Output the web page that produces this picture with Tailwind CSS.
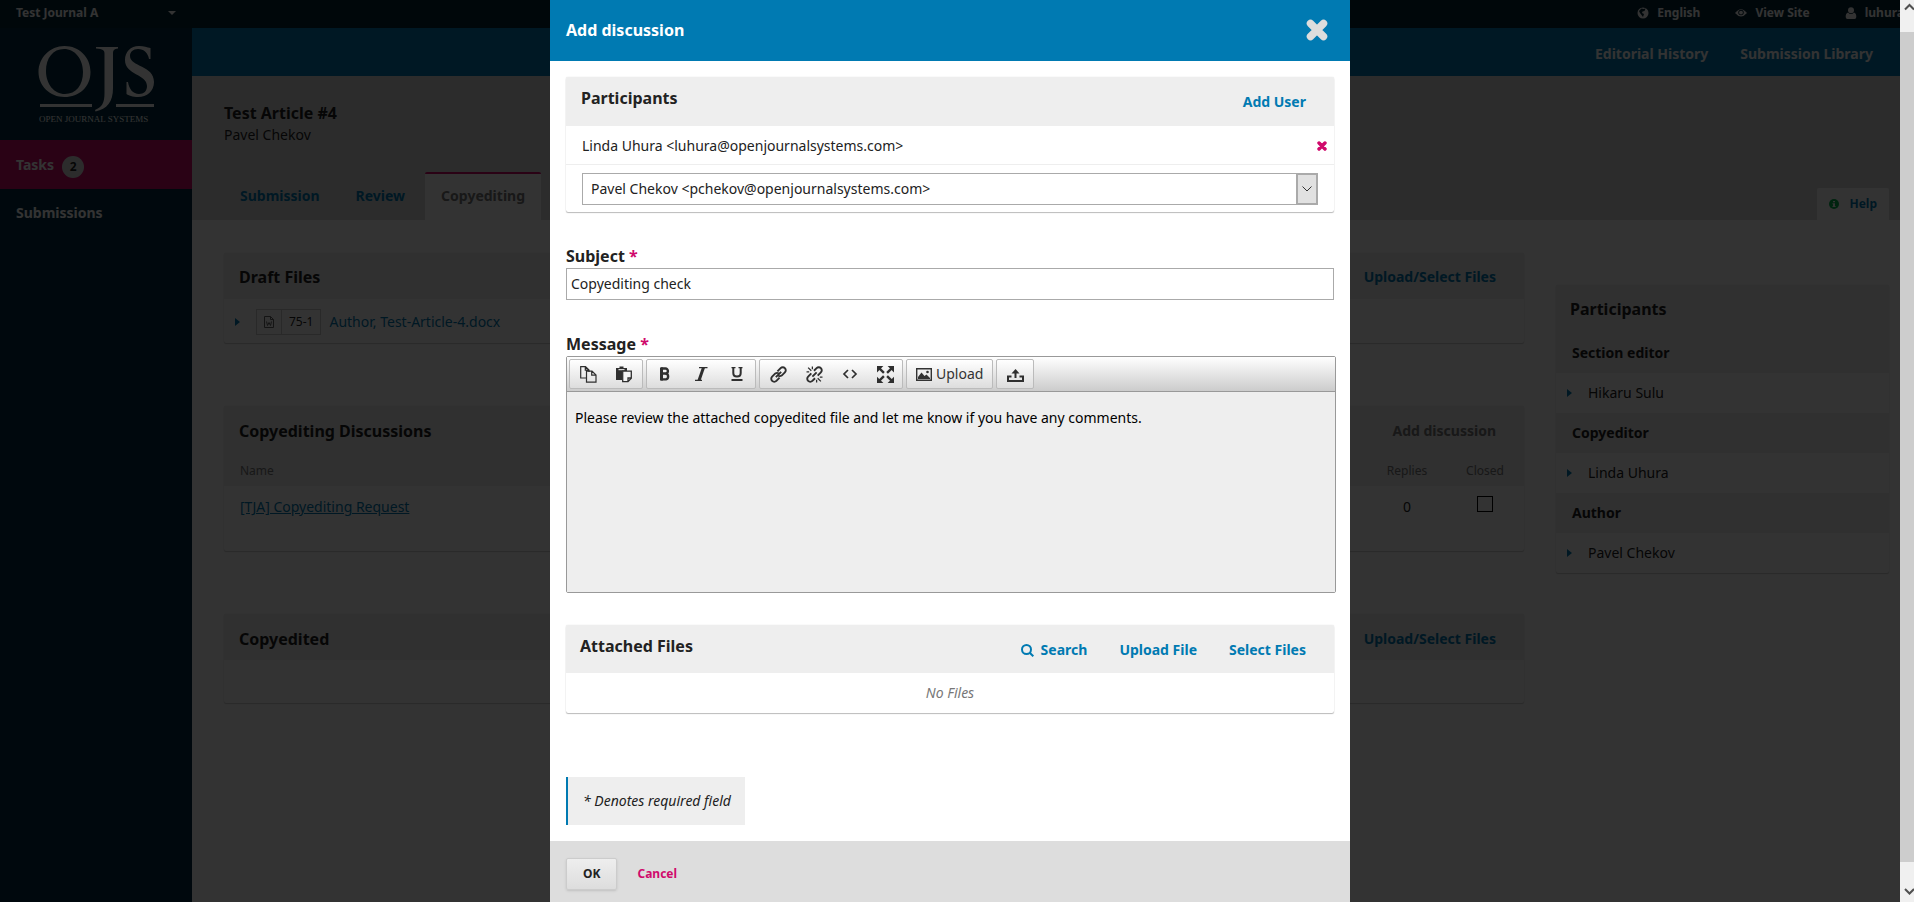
<!DOCTYPE html>
<html lang="en">
<head>
<meta charset="utf-8">
<title>Add discussion</title>
<script src="https://cdn.jsdelivr.net/npm/@tailwindcss/browser@4"></script>
</head>
<body class="font-['Noto_Sans',sans-serif] text-sm leading-5 text-[#222]">
<svg class="hidden">
  <symbol id="times" viewBox="0 0 22 22"><path d="M4.500 4.500L17.500 17.500M17.500 4.500L4.500 17.500" stroke="currentColor" stroke-width="5" fill="none" stroke-linecap="square"/><path d="M4.500 4.500L17.500 17.500M17.500 4.500L4.500 17.500" stroke="currentColor" stroke-width="7.500" fill="none" stroke-linecap="round"/></symbol>
  <symbol id="tri" viewBox="0 0 5 8"><path d="M0 0L5 4L0 8z" fill="currentColor"/></symbol>
</svg>
<div class="flex h-screen overflow-hidden">
  <div class="relative flex min-w-0 flex-1 flex-col overflow-hidden">
    <!-- Top bar -->
    <header class="flex h-7 shrink-0 items-center justify-between overflow-hidden bg-[#002434] pb-0.5 text-xs font-bold text-white">
      <button class="flex w-44 items-center justify-between pl-4 font-bold">Test Journal A
        <svg class="h-1 w-2" viewBox="0 0 8 4"><path d="M0 0h8L4 4z" fill="currentColor"/></svg>
      </button>
      <nav class="-mr-1 flex items-center gap-[35px]">
        <a href="#" class="flex items-center gap-2"><svg class="size-3" viewBox="0 0 12 12"><circle cx="6" cy="6" r="5.500" fill="currentColor"/><path d="M4.500 1.500L6.500 2L8.500 1.500L7.500 4L5.500 4.500L5 6L7 7L6 10L4.500 8L3 6L2 4z" fill="#002434"/></svg>English</a>
        <a href="#" class="flex items-center gap-2"><svg class="h-3 w-3" viewBox="0 0 14 12"><path d="M0 6Q7-3 14 6Q7 14 0 6z" fill="currentColor"/><circle cx="7" cy="5.500" r="3.200" fill="#002434"/><circle cx="7" cy="5.500" r="2.200" fill="currentColor"/></svg>View Site</a>
        <a href="#" class="flex items-center gap-2"><svg class="size-3" viewBox="0 0 12 12"><circle cx="6" cy="3.200" r="3" fill="currentColor"/><path d="M3 5.500C1 6 .7 8 .7 10Q.7 12 2.500 12h7Q11.300 12 11.300 10C11.300 8 11 6 9 5.500Q6 8.500 3 5.500z" fill="currentColor"/></svg>luhura</a>
      </nav>
    </header>
    <div class="flex min-h-0 flex-1">
      <!-- Sidebar -->
      <aside class="w-48 shrink-0 bg-[#002c40] font-bold text-white">
        <div class="h-28 pl-9 pt-2">
          <svg class="h-24 w-32 font-normal" viewBox="0 0 128 96" role="img" aria-label="Open Journal Systems" fill="#fff">
            <path fill-rule="evenodd" d="M28.500 10C43 10 54.500 21 54.500 36S43 61 28.500 61S2.500 50 2.500 36S14 10 28.500 10zM28 13C17 13 10 22 10 35S18 58 29 58S47 49 47 36S39 13 28 13z"/>
            <path d="M60 11H82V12.500C78 13 77 14 77 18V52C77 66 71 73 59.500 75.500L59 74C66 71 68.500 67 68.500 57V18C68.500 14 67 13 60 12.500z"/>
            <path d="M114.500 12V23H113C112 17 108 13 102 13C97 13 94 16 94 20C94 31 118 29 118 46C118 55 111 61 102 61C97 61 92 59.500 90.500 58V46H92C93 53 97 58 103 58C108 58 111 55 111 50C111 38 89 39 89 24C89 16 94.500 10 103 10C108 10 111 11.500 114.500 12z"/>
            <path d="M4 68h52v3H4zM80 68h38v3H80z"/>
            <text x="3" y="86" font-size="9" font-family="Liberation Serif, serif">OPEN JOURNAL SYSTEMS</text>
          </svg>
        </div>
        <a href="#" class="flex h-[49px] items-center gap-2 bg-[#d00a6c] pl-4">Tasks
          <span class="mt-1 flex size-[22px] items-center justify-center rounded-full bg-[#ddd] text-xs text-[#222]">2</span></a>
        <a href="#" class="flex h-12 items-center pl-4">Submissions</a>
      </aside>
      <main class="min-w-0 flex-1 bg-white">
        <nav class="flex h-12 items-center justify-end gap-8 bg-[#007ab2] pr-[27px] pt-1 font-bold text-white">
          <a href="#">Editorial History</a><a href="#">Submission Library</a>
        </nav>
        <section class="flex h-36 flex-col justify-between bg-[#ddd] pt-[25px]">
          <div class="pl-8"><h1 class="text-base font-bold leading-6">Test Article #4</h1><p>Pavel Chekov</p></div>
          <div class="flex items-end justify-between pl-8 pr-[11px]">
            <div class="flex h-12 items-stretch font-bold text-[#007ab2]">
              <a href="#" class="flex items-center px-4">Submission</a>
              <a href="#" class="flex items-center px-5">Review</a>
              <a href="#" class="flex items-center rounded-t-xs border-t-2 border-[#d00a6c] bg-white px-4 pb-0.5 text-[#777]">Copyediting</a>
            </div>
            <a href="#" class="flex h-8 items-center gap-[10px] rounded-t-xs bg-white px-3 text-xs font-bold text-[#007ab2]"><svg class="size-[10px]" viewBox="0 0 10 10"><circle cx="5" cy="5" r="5" fill="#00b24e"/><path d="M4 2h2v1.300H4zM3.500 4.200H6V7h.6v1H3.500V7H4V5.200h-.5z" fill="#fff"/></svg>Help</a>
          </div>
        </section>
        <div class="flex items-start gap-8 pl-8 pr-[11px] pt-[33px]">
          <div class="flex min-w-0 flex-1 flex-col gap-[63px]">
            <section class="rounded-xs shadow-[0_1px_1px_#ccc,0_0_1px_#ccc]">
              <div class="flex h-[46px] items-center justify-between bg-[#eee] pl-[15px] pr-7 pt-0.5"><h2 class="text-base font-bold">Draft Files</h2><a href="#" class="font-bold text-[#007ab2]">Upload/Select Files</a></div>
              <div class="flex h-11 items-center pl-[11px] pt-0.5 text-[#007ab2]">
                <svg class="mr-4 h-2 w-[5px]"><use href="#tri"/></svg>
                <span class="mr-2 flex h-[26px] items-center border border-[#ccc] text-xs text-[#222]"><span class="flex h-full items-center border-r border-[#ccc] px-1.5"><svg class="h-3 w-3" viewBox="0 0 12 12" fill="none" stroke="#666"><path d="M1.500 .5h6l3 3v8h-9zM7.500 .5v3h3M3.500 5.500l1 4 1.500-3 1.500 3 1-4"/></svg></span><span class="px-[7px]">75-1</span></span>
                <a href="#">Author, Test-Article-4.docx</a>
              </div>
            </section>
            <section class="rounded-xs shadow-[0_1px_1px_#ccc,0_0_1px_#ccc]">
              <div class="flex h-[50px] items-center justify-between bg-[#eee] pl-[15px] pr-7"><h2 class="text-base font-bold">Copyediting Discussions</h2><a href="#" class="font-bold text-[#777]">Add discussion</a></div>
              <table class="w-full table-fixed">
                <thead class="bg-[#eee] text-xs text-[#777]"><tr class="h-[30px]"><th class="pl-4 text-left font-normal">Name</th><th class="w-[78px] font-normal">Replies</th><th class="w-[78px] font-normal">Closed</th></tr></thead>
                <tbody><tr class="h-[65px] align-top"><td class="pl-4 pt-[11px]"><a href="#" class="text-[#007ab2] underline">[TJA] Copyediting Request</a></td><td class="pt-[11px] text-center">0</td><td class="pt-[10px] text-center"><input type="checkbox" aria-label="Closed" class="inline-block size-4 appearance-none border border-black align-top"></td></tr></tbody>
              </table>
            </section>
            <section class="rounded-xs shadow-[0_1px_1px_#ccc,0_0_1px_#ccc]">
              <div class="flex h-[46px] items-center justify-between bg-[#eee] pl-[15px] pr-7 pt-1"><h2 class="text-base font-bold">Copyedited</h2><a href="#" class="font-bold text-[#007ab2]">Upload/Select Files</a></div>
              <div class="h-[43px]"></div>
            </section>
          </div>
          <section class="mt-8 w-[333px] shrink-0 rounded-xs shadow-[0_1px_1px_#ccc,0_0_1px_#ccc]">
            <h2 class="flex h-12 items-center bg-[#eee] pl-[14px] text-base font-bold">Participants</h2>
            <h3 class="flex h-10 items-center bg-[#eee] pl-4 font-bold">Section editor</h3>
            <p class="flex h-10 items-center gap-4 pl-[11px]"><svg class="h-2 w-[5px] text-[#007ab2]"><use href="#tri"/></svg>Hikaru Sulu</p>
            <h3 class="flex h-10 items-center bg-[#eee] pl-4 font-bold">Copyeditor</h3>
            <p class="flex h-10 items-center gap-4 pl-[11px]"><svg class="h-2 w-[5px] text-[#007ab2]"><use href="#tri"/></svg>Linda Uhura</p>
            <h3 class="flex h-10 items-center bg-[#eee] pl-4 font-bold">Author</h3>
            <p class="flex h-10 items-center gap-4 pl-[11px]"><svg class="h-2 w-[5px] text-[#007ab2]"><use href="#tri"/></svg>Pavel Chekov</p>
          </section>
        </div>
      </main>
    </div>

    <!-- Modal -->
    <div class="absolute inset-0 flex justify-center bg-black/80">
      <form role="dialog" aria-label="Add discussion" class="flex w-[800px] flex-col bg-white">
        <div class="flex h-[61px] shrink-0 items-center justify-between bg-[#007ab2] pb-0.5 pl-4 pr-[22px] text-white">
          <h2 class="text-base font-bold leading-6">Add discussion</h2>
          <button type="button" aria-label="Close" class="text-[#ddd]"><svg class="size-[22px]"><use href="#times"/></svg></button>
        </div>
        <div class="flex flex-1 flex-col px-4 pt-4">
          <section class="rounded-xs shadow-[0_1px_1px_#bbb,0_0_1px_#ccc]">
            <div class="flex h-[49px] items-center justify-between rounded-t-xs bg-[#eee] pl-[15px] pr-7"><h3 class="pb-2 text-base font-bold leading-6">Participants</h3><a href="#" class="font-bold text-[#007ab2]">Add User</a></div>
            <div class="flex h-[39px] items-center justify-between border-b border-[#eee] pl-4 pr-[7px] pt-0.5">Linda Uhura &lt;luhura@openjournalsystems.com&gt;
              <button type="button" aria-label="Remove" class="text-[#d00a6c]"><svg class="size-[10px]"><use href="#times"/></svg></button></div>
            <div class="relative px-4 pb-[7px] pt-2">
              <select aria-label="Participant" class="block h-8 w-full appearance-none border border-[#aaa] bg-white pl-2"><option>Pavel Chekov &lt;pchekov@openjournalsystems.com&gt;</option></select>
              <span class="pointer-events-none absolute right-4 top-2 flex h-8 w-[22px] items-center justify-center border-2 border-[#aaa] bg-[#e1e1e1]"><svg class="h-1.5 w-[10px]" viewBox="0 0 10 6"><path d="M.5 .5L5 5L9.500 .5" fill="none" stroke="#333"/></svg></span>
            </div>
          </section>
          <label for="subject" class="mt-[33px] text-base font-bold leading-[23px]">Subject <span class="text-[#d00a6c]">*</span></label>
          <input id="subject" value="Copyediting check" class="h-8 border border-[#aaa] px-1 pb-0.5">
          <label for="message" class="mt-[33px] text-base font-bold leading-[23px]">Message <span class="text-[#d00a6c]">*</span></label>
          <div class="-mr-0.5 rounded-xs border border-[#999]">
            <div class="flex h-[35px] items-center gap-[3px] border-b border-[#999] bg-linear-to-b from-white to-[#ccc] pl-0.5 text-[#2f2f2f]">
              <div class="flex h-[30px] items-center rounded-xs border border-[#bbb] bg-linear-to-b from-white to-[#ddd]">
                <button type="button" aria-label="Copy" class="flex w-9 justify-center"><svg class="size-[17px]" viewBox="0 0 17 17" fill="none" stroke="currentColor" stroke-width="1.200"><path d="M6 12H.7V.7H5.500L9 4V6M5.300 .7V4.200H9M6.500 5.200h5.500l4 3.700v7.300H6.500zM11.700 5.200v4h4.200"/></svg></button>
                <button type="button" aria-label="Paste" class="flex w-9 justify-center"><svg class="size-[17px]" viewBox="0 0 17 17"><path d="M0 2h3.500V.5h4V2H11V5H6v9H0z" fill="currentColor"/><path d="M2.500 3.700h6" stroke="#fff"/><path d="M6.700 5.200h8.600v7L12 15.700H6.700zM15.300 12H12v3.700" fill="#f4f4f4" stroke="currentColor" stroke-width="1.300"/></svg></button>
              </div>
              <div class="flex h-[30px] items-center rounded-xs border border-[#bbb] bg-linear-to-b from-white to-[#ddd]">
                <button type="button" aria-label="Bold" class="flex w-9 justify-center"><svg class="size-4" viewBox="0 0 16 16" fill="none" stroke="currentColor" stroke-width="3"><path d="M4.500 1.500V14.500" /><path d="M4 2.500h4.500a2.400 2.500 0 0 1 0 5H4M8.500 7.700h.5a2.600 2.900 0 0 1 0 5.700H4" stroke-width="2.400"/></svg></button>
                <button type="button" aria-label="Italic" class="flex w-9 justify-center"><svg class="size-4" viewBox="0 0 16 16" fill="none" stroke="currentColor"><path d="M6 1.600h8.500M2 14.400h7" stroke-width="1.300"/><path d="M10.500 1.500L6 14.500" stroke-width="3"/></svg></button>
                <button type="button" aria-label="Underline" class="flex w-9 justify-center"><svg class="size-4" viewBox="0 0 16 16" fill="none" stroke="currentColor"><path d="M4.300 1V7Q4.300 10.500 8 10.500Q11.700 10.500 11.700 7V1" stroke-width="2"/><path d="M2.500 1.600h4M9.500 1.600h4" stroke-width="1.200"/><path d="M2.500 14h11" stroke-width="2"/></svg></button>
              </div>
              <div class="flex h-[30px] items-center rounded-xs border border-[#bbb] bg-linear-to-b from-white to-[#ddd]">
                <button type="button" aria-label="Link" class="flex w-9 justify-center"><svg class="size-[17px]" viewBox="0 0 16 16" fill="none" stroke="currentColor" stroke-width="1.800"><path d="M5.500 10.500L10.500 5.500M7 5L10 2A2.200 2.200 0 0 1 14 6L11 9Q9.500 10 8 9.200M9 11L6 14A2.200 2.200 0 0 1 2 10L5 7Q6.500 6 8 6.800"/></svg></button>
                <button type="button" aria-label="Unlink" class="flex w-9 justify-center"><svg class="size-[17px]" viewBox="0 0 16 16" fill="none" stroke="currentColor" stroke-width="1.800"><path d="M7.500 4.500L10 2A2.200 2.200 0 0 1 14 6L11 9M8.500 11.500L6 14A2.200 2.200 0 0 1 2 10L5 7M6 10L10 6"/><path d="M2 1.500L5 4.500M6 .5V3M.5 5.500H3M14 14.500L11 11.500M10 15.500V13M15.500 10.500H13" stroke-width="1.200"/></svg></button>
                <button type="button" aria-label="Source code" class="flex w-9 justify-center"><svg class="size-4" viewBox="0 0 16 16" fill="none" stroke="currentColor" stroke-width="1.700"><path d="M6 4L2 8L6 12M10 4L14 8L10 12"/></svg></button>
                <button type="button" aria-label="Fullscreen" class="flex w-[34px] justify-center"><svg class="size-[17px]" viewBox="0 0 16 16" fill="currentColor" stroke="currentColor" stroke-width="2.200"><g id="arr"><path d="M2 2L6.500 6.500"/><path d="M0 0h6L0 6z" stroke="none"/></g><use href="#arr" transform="rotate(90 8 8)"/><use href="#arr" transform="rotate(180 8 8)"/><use href="#arr" transform="rotate(270 8 8)"/></svg></button>
              </div>
              <button type="button" class="flex h-[30px] items-center gap-1 rounded-xs border border-[#bbb] bg-linear-to-b from-white to-[#ddd] px-[9px] text-[#333]"><svg class="h-[13px] w-4" viewBox="0 0 16 13"><path d="M.7 .7h14.600v11.600H.7z" fill="none" stroke="currentColor" stroke-width="1.400"/><path d="M2 11V9L5.500 4.500L8.500 8L10.500 6.500L14 10v1z" fill="currentColor"/><circle cx="11.500" cy="4" r="1.300" fill="currentColor"/></svg>Upload</button>
              <button type="button" aria-label="Insert file" class="flex h-[30px] w-[38px] items-center justify-center rounded-xs border border-[#bbb] bg-linear-to-b from-white to-[#ddd]"><svg class="size-[17px]" viewBox="0 0 17 17" fill="none" stroke="currentColor"><path d="M4.500 10.500H1V15H16V10.500H12.500" stroke-width="2"/><path d="M8.500 12V5" stroke-width="2"/><path d="M4.500 7.500L8.500 3L12.500 7.500z" fill="currentColor" stroke="none"/></svg></button>
            </div>
            <textarea id="message" class="block h-[200px] w-full resize-none bg-[#eee] px-2 pt-4 text-black">Please review the attached copyedited file and let me know if you have any comments.</textarea>
          </div>
          <section class="mt-8 rounded-xs shadow-[0_1px_1px_#bbb,0_0_1px_#ccc]">
            <div class="flex h-12 items-center justify-between rounded-t-xs bg-[#eee] pl-[14px] pr-7"><h3 class="pb-1.5 text-base font-bold leading-6">Attached Files</h3>
              <div class="flex gap-8 pt-0.5 font-bold text-[#007ab2]"><a href="#" class="flex items-center gap-[7px]"><svg class="size-[13px]" viewBox="0 0 13 13" fill="none" stroke="currentColor" stroke-width="2"><circle cx="5.500" cy="5.500" r="4.500"/><path d="M8.700 8.700L12.300 12.300"/></svg>Search</a><a href="#">Upload File</a><a href="#">Select Files</a></div></div>
            <p class="flex h-10 items-center justify-center italic text-[#777]">No Files</p>
          </section>
          <p class="mb-4 mt-auto flex h-12 items-center self-start border-l-2 border-[#007ab2] bg-[#eee] pl-[15px] pr-[14px] italic">* Denotes required field</p>
        </div>
        <div class="flex h-[61px] shrink-0 items-center gap-5 bg-[#ddd] px-4 pt-1 text-xs font-bold">
          <button class="h-8 rounded-xs border border-[#ccc] bg-linear-to-b from-[#eee] to-[#ddd] px-4 shadow-sm">OK</button>
          <button type="button" class="text-[#d00a6c]">Cancel</button>
        </div>
      </form>
    </div>
  </div>
  <!-- Page scrollbar -->
  <div class="flex w-[14px] shrink-0 flex-col overflow-hidden bg-[#f0f0f0]">
    <svg class="h-8 w-[14px] shrink-0" viewBox="0 0 14 32"><path d="M5 9.500L9.500 5L14 9.500" fill="none" stroke="#505050" stroke-width="2"/></svg>
    <div class="flex-1 bg-[#cdcdcd]"></div>
    <svg class="h-10 w-[14px] shrink-0" viewBox="0 0 14 40"><path d="M5 27L9.500 31.500L14 27" fill="none" stroke="#505050" stroke-width="2"/></svg>
  </div>
</div>
</body>
</html>
